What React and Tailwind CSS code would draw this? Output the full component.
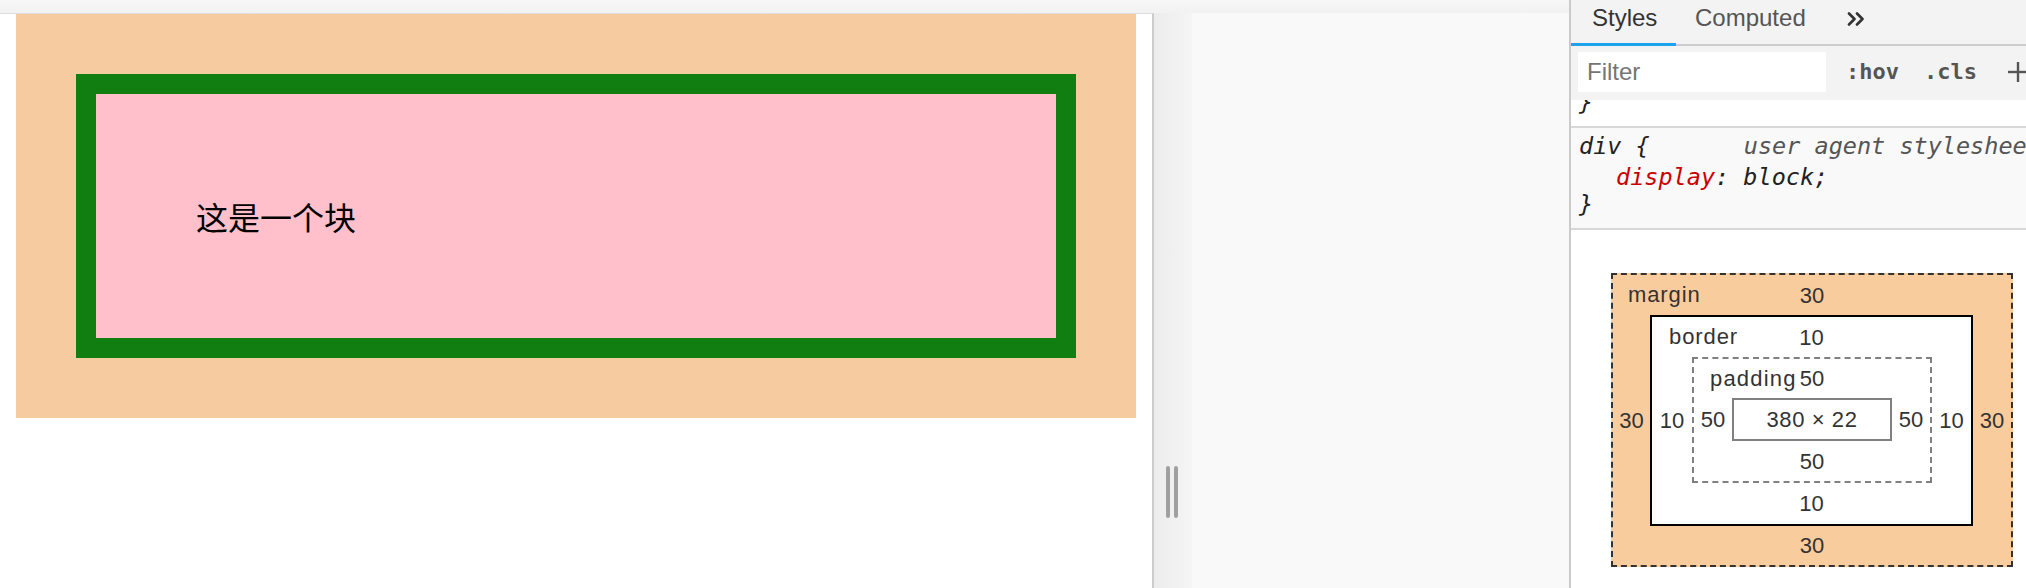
import React from "react";

const sans = "font-['Liberation_Sans',Arial,sans-serif]";
const mono = "font-['DejaVu_Sans_Mono','Liberation_Mono',monospace]";

const BoxModel = () => {
  return (
    <div className={`${sans} text-[22px] text-[#333333]`}>
      {/* margin */}
      <div className="relative w-[402px] h-[294px] border-2 border-dashed border-[#333333] bg-[#f9cc9d] flex flex-col">
        <span className="absolute left-[15px] top-0 leading-[40px] tracking-[0.9px]">margin</span>
        <div className="h-[40px] flex items-center justify-center">30</div>
        <div className="flex">
          <div className="w-[37px] flex items-center justify-center">30</div>
          {/* border */}
          <div className="relative w-[323px] h-[211px] border-2 border-black bg-white flex flex-col">
            <span className="absolute left-[17px] top-0 leading-[40px] tracking-[0.9px]">border</span>
            <div className="h-[40px] flex items-center justify-center">10</div>
            <div className="flex">
              <div className="w-[40px] flex items-center justify-center">10</div>
              {/* padding */}
              <div className="relative w-[240px] h-[126px] border-2 border-dashed border-[#808080] flex flex-col">
                <span className="absolute left-[16px] top-0 leading-[39px] tracking-[1.2px]">padding</span>
                <div className="h-[39px] flex items-center justify-center">50</div>
                <div className="flex">
                  <div className="w-[38px] flex items-center justify-center">50</div>
                  <div className="w-[160px] h-[43px] border-2 border-[#808080] flex items-center justify-center tracking-[0.6px]">
                    380 × 22
                  </div>
                  <div className="w-[38px] flex items-center justify-center">50</div>
                </div>
                <div className="flex-1 flex items-center justify-center">50</div>
              </div>
              <div className="w-[39px] flex items-center justify-center">10</div>
            </div>
            <div className="flex-1 flex items-center justify-center">10</div>
          </div>
          <div className="w-[38px] flex items-center justify-center">30</div>
        </div>
        <div className="flex-1 flex items-center justify-center">30</div>
      </div>
    </div>
  );
};

const DevTools = () => {
  return (
    <div className={`w-[457px] shrink-0 border-l-2 border-[#cbcbcb] bg-white flex flex-col overflow-hidden ${sans}`}>
      {/* tabs */}
      <div className="h-[46px] shrink-0 bg-[#f3f3f3] border-b-2 border-[#cccccc] flex text-[24px]">
        <div className="relative w-[105px] pl-[21px] pt-[6px] leading-[24px] text-[#333333]">
          Styles
          <span className="absolute left-0 right-0 bottom-[-2px] h-[3px] bg-[#1ea4ec]" />
        </div>
        <div className="w-[152px] pl-[19px] pt-[6px] leading-[24px] text-[#555555]">Computed</div>
        <div className="pl-[19px] pt-[12px]">
          <svg width="20" height="14" viewBox="0 0 20 14" fill="none" stroke="#333333" strokeWidth="2.6" strokeLinecap="round" strokeLinejoin="round">
            <polyline points="2,1.5 7.5,7 2,12.5" />
            <polyline points="10,1.5 15.5,7 10,12.5" />
          </svg>
        </div>
      </div>

      {/* filter */}
      <div className="h-[54px] shrink-0 bg-[#f3f3f3] flex items-start pt-[6px] whitespace-nowrap overflow-hidden">
        <div className="shrink-0 ml-[7px] w-[248px] h-[40px] bg-white pl-[9px] text-[24px] leading-[40px] text-[#757575]">
          Filter
        </div>
        <span className={`${mono} shrink-0 ml-[20px] text-[22px] leading-[40px] font-bold text-[#555555]`}>:hov</span>
        <span className={`${mono} shrink-0 ml-[25px] text-[22px] leading-[40px] font-bold text-[#555555]`}>.cls</span>
        <div className="shrink-0 ml-[31px] mt-[10px]">
          <svg width="22" height="20" viewBox="0 0 22 20" fill="none" stroke="#555555" strokeWidth="2.4">
            <line x1="0" y1="10" x2="22" y2="10" />
            <line x1="10" y1="0" x2="10" y2="20" />
          </svg>
        </div>
      </div>

      {/* rules */}
      <div className={`${mono} italic text-[23.5px] text-[#222222]`}>
        <div className="h-[26px] overflow-hidden bg-white pl-[8px]">
          <div className="-mt-[12px] leading-[28px]">{"}"}</div>
        </div>
        <div className="border-y-2 border-[#d8d8d8] bg-[#f9f9f9] pl-[8px] pt-[4px] h-[104px] whitespace-nowrap">
          <div className="h-[31px] leading-[28px]">
            <span>div {"{"}</span>
            <span className="ml-[94px] text-[#555555]">user agent stylesheet</span>
          </div>
          <div className="h-[27px] leading-[28px] pl-[37px]">
            <span className="text-[#c80000]">display</span>
            <span>: block;</span>
          </div>
          <div className="leading-[28px]">{"}"}</div>
        </div>
      </div>

      {/* box model */}
      <div className="pt-[43px] pl-[40px]">
        <BoxModel />
      </div>
    </div>
  );
};

export default function App() {
  return (
    <div className="flex w-[2026px] h-[588px] overflow-hidden bg-[#f9f9f9]">
      <div className="w-[1569px] shrink-0 flex flex-col">
        <div className="h-[13px] shrink-0 bg-linear-to-b from-[#f7f7f7] to-[#f2f2f2]" />
        <div className="flex flex-1">
          <div className="w-[1154px] shrink-0 bg-white border-t border-t-[#dddddd] border-r-2 border-r-[#cccccc] pl-[16px]">
            <div className="w-[1120px] h-[404px] p-[60px] bg-[#f7cba0]">
              <div className="h-full border-[20px] border-[#107e10] bg-[#ffc0cb] p-[100px]">
                <div className="text-[32px] leading-[44px] text-black font-['Noto_Sans_CJK_SC',sans-serif]">
                  这是一个块
                </div>
              </div>
            </div>
          </div>
          <div className="w-[38px] shrink-0 bg-linear-to-r from-[#ececec] to-[#f5f5f5] pt-[453px] pl-[12px] flex items-start gap-[4px]">
            <span className="w-[4px] h-[52px] rounded-full bg-[#a0a0a0]" />
            <span className="w-[4px] h-[52px] rounded-full bg-[#a0a0a0]" />
          </div>
          <div className="flex-1" />
        </div>
      </div>
      <DevTools />
    </div>
  );
}
